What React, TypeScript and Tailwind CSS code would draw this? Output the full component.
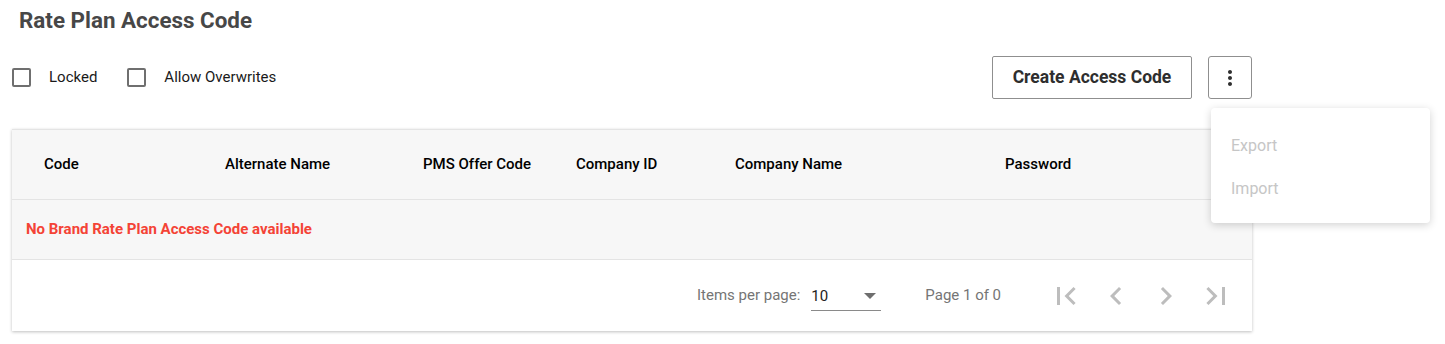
import { useState } from "react";

const columns = [
  { label: "Code", width: "w-[181px]" },
  { label: "Alternate Name", width: "w-[198px]" },
  { label: "PMS Offer Code", width: "w-[153px]" },
  { label: "Company ID", width: "w-[159px]" },
  { label: "Company Name", width: "w-[270px]" },
  { label: "Password", width: "w-[150px]" },
];

const pagerIcons = [
  "M18.41 16.59L13.82 12l4.59-4.59L17 6l-6 6 6 6zM6 6h2v12H6z",
  "M15.41 7.41L14 6l-6 6 6 6 1.41-1.41L10.83 12z",
  "M10 6L8.59 7.41 13.17 12l-4.58 4.59L10 18l6-6z",
  "M5.59 7.41L10.18 12l-4.59 4.59L7 18l6-6-6-6zM16 6h2v12h-2z",
];

function Checkbox({ label }: { label: string }) {
  const [checked, setChecked] = useState(false);
  return (
    <label className="flex items-center gap-[18px] cursor-pointer">
      <span
        onClick={() => setChecked(!checked)}
        className="w-[19px] h-[19px] border-2 border-[#6f6f6f] rounded-[2px] bg-white"
      />
      <span className="text-[15px] text-[#1a1a1a]">{label}</span>
    </label>
  );
}

export default function App() {
  return (
    <div
      className="relative min-h-[344px] bg-white px-3 pt-[5px]"
      style={{ fontFamily: "Roboto, 'Noto Sans', sans-serif" }}
    >
      {/* Title */}
      <h1 className="pl-[7px] text-[22.4px] leading-[30px] font-bold text-[#474747]">
        Rate Plan Access Code
      </h1>

      {/* Toolbar */}
      <div className="mt-[21px] w-[1240px] flex items-center justify-between">
        <div className="flex items-center gap-[30px]">
          <Checkbox label="Locked" />
          <Checkbox label="Allow Overwrites" />
        </div>
        <div className="flex items-center gap-4">
          <button className="h-[43px] w-[200px] border border-[#8f8f8f] rounded-[2px] bg-white text-[17.5px] font-bold text-[#2e2e2e]">
            Create Access Code
          </button>
          <button className="h-[43px] w-[44px] border border-[#8f8f8f] rounded-[3px] bg-white flex items-center justify-center">
            <svg width="24" height="24" viewBox="0 0 24 24" fill="#2f2f2f">
              <path d="M12 8c1.1 0 2-.9 2-2s-.9-2-2-2-2 .9-2 2 .9 2 2 2zm0 2c-1.1 0-2 .9-2 2s.9 2 2 2 2-.9 2-2-.9-2-2-2zm0 6c-1.1 0-2 .9-2 2s.9 2 2 2 2-.9 2-2-.9-2-2-2z" />
            </svg>
          </button>
        </div>
      </div>

      {/* Table card */}
      <div className="mt-[30px] w-[1240px] bg-white border-t border-[#e4e4e4] shadow-[0_1px_3px_rgba(0,0,0,0.25)]">
        <div className="h-[70px] bg-[#f7f7f7] flex items-center pl-[32px] border-b border-[#e4e4e4]">
          {columns.map((c) => (
            <div key={c.label} className={`${c.width} text-[15px] font-medium text-black`}>
              {c.label}
            </div>
          ))}
        </div>
        <div className="h-[60px] bg-[#f7f7f7] flex items-center pl-[14px] border-b border-[#e4e4e4]">
          <span className="text-[15px] font-bold text-[#f44336]">
            No Brand Rate Plan Access Code available
          </span>
        </div>
        <div className="h-[71px] flex items-center pl-[685px] text-[15px] text-[#757575]">
          <span>Items per page:</span>
          <div className="ml-[11px] w-[70px] h-[30px] border-b border-[#8a8a8a] flex items-center justify-between pt-[2px]">
            <span className="text-[15px] text-[#222]">10</span>
            <span className="mr-[5px] w-0 h-0 border-l-[6px] border-r-[6px] border-t-[6px] border-l-transparent border-r-transparent border-t-[#6e6e6e]" />
          </div>
          <span className="ml-[44px]">Page 1 of 0</span>
          <div className="ml-[45px] flex items-center gap-[10px]">
            {pagerIcons.map((d) => (
              <button key={d} className="w-[40px] h-[40px] flex items-center justify-center">
                <svg width="36" height="36" viewBox="0 0 24 24" fill="#bdbdbd">
                  <path d={d} />
                </svg>
              </button>
            ))}
          </div>
        </div>
      </div>

      {/* Overflow menu */}
      <div className="absolute left-[1211px] top-[108px] w-[219px] bg-white rounded-[4px] shadow-[0_2px_8px_rgba(0,0,0,0.18)] pt-[16px] pb-[13px]">
        {["Export", "Import"].map((item) => (
          <div key={item} className="h-[43px] flex items-center px-[20px] text-[16px] text-[#c6c6c6]">
            {item}
          </div>
        ))}
      </div>
    </div>
  );
}
